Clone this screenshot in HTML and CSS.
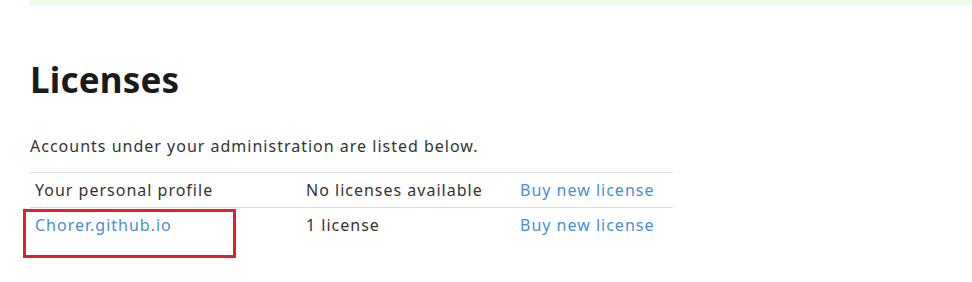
FILE: index.html
```html
<!DOCTYPE html>
<html lang="en">
<head>
  <meta charset="UTF-8" />
  <title>Licenses</title>
  <link rel="stylesheet" href="styles.css">
</head>
<body>
  <div class="notice"></div>

  <main class="content">
    <h1>Licenses</h1>
    <p class="intro">Accounts under your administration are listed below.</p>

    <table class="licenses">
      <tr>
        <td class="account">Your personal profile</td>
        <td class="count">No licenses available</td>
        <td class="action"><a href="#">Buy new license</a></td>
      </tr>
      <tr>
        <td class="account">
          <a href="#">Chorer.github.io</a>
          <span class="highlight"></span>
        </td>
        <td class="count">1 license</td>
        <td class="action"><a href="#">Buy new license</a></td>
      </tr>
    </table>
  </main>
</body>
</html>
```

FILE: styles.css
```css
:root {
  --text: #333;
  --heading: #1b1b1b;
  --link: #4a8ed3;
  --border: #dcdcdc;
  --notice: #f0fbe6;
  --mark: #e3212b;
}

* {
  margin: 0;
  padding: 0;
  box-sizing: border-box;
}

body {
  background: #fff;
  color: var(--text);
  font-family: 'Noto Sans', sans-serif;
  font-size: 16px;
  letter-spacing: 1px;
}

.notice {
  height: 6px;
  margin-left: 30px;
  background-color: var(--notice);
}

.content {
  padding: 0 30px;
}

h1 {
  margin-top: 50px;
  font-size: 35px;
  font-weight: 700;
  color: var(--heading);
  line-height: 48px;
  letter-spacing: 0.2px;
}

.intro {
  margin-top: 30px;
  line-height: 24px;
}

.licenses {
  margin-top: 14px;
  width: 643px;
  border-collapse: collapse;
}

.licenses td {
  border-top: 1px solid var(--border);
  padding: 6px 5px;
  line-height: 22px;
  vertical-align: top;
}

.licenses tr:last-child td {
  padding-bottom: 22px;
}

.account {
  position: relative;
  width: 271px;
}

.count {
  width: 214px;
}

a {
  color: var(--link);
  text-decoration: none;
}

.highlight {
  position: absolute;
  left: -7px;
  top: 1px;
  width: 213px;
  height: 49px;
  border: 3px solid var(--mark);
}
```
